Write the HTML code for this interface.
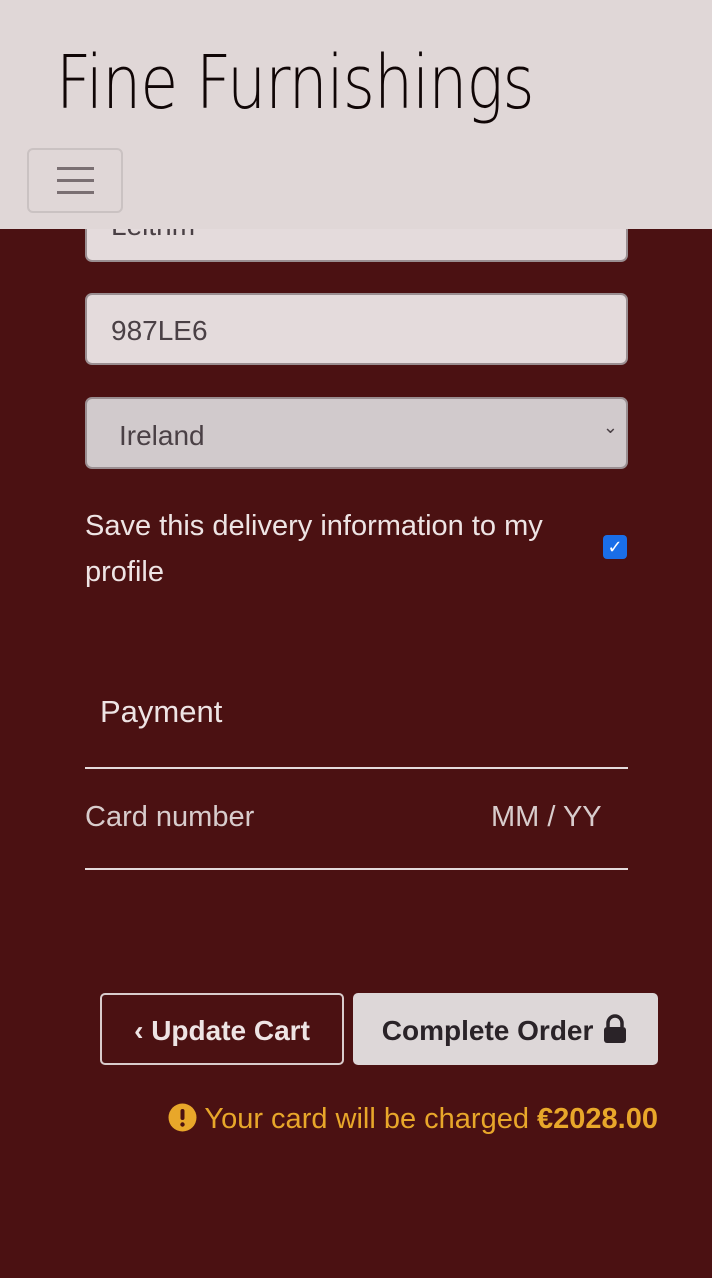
<!DOCTYPE html>
<html><head><style>
body{margin:0;width:712px;height:1278px;background:#4b1112;font-family:"Liberation Sans","DejaVu Sans",sans-serif;position:relative;overflow:hidden}
.a{position:absolute}
.inp{position:absolute;left:85px;width:543px;height:72px;border:2px solid #9a8e91;border-radius:7px;background:#e4dbdc;box-sizing:border-box;font-size:28px;color:#4a4045}
</style></head><body>
<div class="inp" style="top:190px"><span class="a" style="left:24px;top:18px">Leitrim</span></div>
<div class="inp" style="top:293px"><span class="a" style="left:24px;top:20px">987LE6</span></div>
<div class="inp" style="top:397px;background:#d1cacc"><span class="a" style="left:32px;top:21px">Ireland</span><span class="a" style="right:8px;top:18px;font-size:18px">&#8964;</span></div>
<div class="a" style="left:85px;top:503px;color:#eee4e4;font-size:29px;line-height:46px;width:500px">Save this delivery information to my profile</div>
<div class="a" style="left:603px;top:535px;width:24px;height:24px;background:#1a6ee8;border-radius:4px;color:#fff;font-size:18px;text-align:center;line-height:24px">&#10003;</div>
<div class="a" style="left:100px;top:694px;color:#eee4e4;font-size:31px">Payment</div>
<div class="a" style="left:85px;top:767px;width:543px;height:2px;background:#e4dbdc"></div>
<div class="a" style="left:85px;top:801px;color:#d8cccc;font-size:29px">Card number</div>
<div class="a" style="left:491px;top:801px;color:#d8cccc;font-size:29px">MM / YY</div>
<div class="a" style="left:85px;top:868px;width:543px;height:2px;background:#e4dbdc"></div>
<div class="a" style="left:100px;top:993px;width:244px;height:72px;border:2px solid #d9cccc;border-radius:5px;box-sizing:border-box;color:#eee4e4;font-size:28px;font-weight:bold;line-height:72px;text-align:center">&#8249; Update Cart</div>
<div class="a" style="left:353px;top:993px;width:305px;height:72px;background:#ddd7d8;border-radius:5px;color:#2a2328;font-size:28px;font-weight:bold;line-height:76px;text-align:center">Complete Order
<svg width="28" height="30" viewBox="0 0 28 30" style="vertical-align:-4px"><path d="M7 13V9a7 7 0 0 1 14 0v4" fill="none" stroke="#2a2328" stroke-width="3.5"/><rect x="3" y="13" width="22" height="16" rx="3" fill="#2a2328"/></svg></div>
<div class="a" style="right:54px;top:1103px;color:#e8a72a;font-size:29px"><svg width="29" height="29" viewBox="0 0 29 29" style="vertical-align:-4px"><circle cx="14.5" cy="14.5" r="14" fill="#e8a72a"/><rect x="12.5" y="6" width="4" height="11" rx="2" fill="#4b1112"/><circle cx="14.5" cy="21.5" r="2.2" fill="#4b1112"/></svg> Your card will be charged <b>€2028.00</b></div>
<div class="a" style="left:0;top:0;width:712px;height:229px;background:#e0d7d7">
<div class="a" style="left:56px;top:40px;font-family:'DejaVu Sans',sans-serif;font-size:74px;letter-spacing:-1px;transform:scaleX(0.83);transform-origin:left;color:#100606;font-weight:200">Fine Furnishings</div>
<div class="a" style="left:27px;top:148px;width:96px;height:65px;border:2px solid #cac2c2;border-radius:6px;box-sizing:border-box">
<div class="a" style="left:28px;top:17px;width:37px;height:3px;background:#7a6f72"></div>
<div class="a" style="left:28px;top:29px;width:37px;height:3px;background:#7a6f72"></div>
<div class="a" style="left:28px;top:41px;width:37px;height:3px;background:#7a6f72"></div>
</div></div>
</body></html>
